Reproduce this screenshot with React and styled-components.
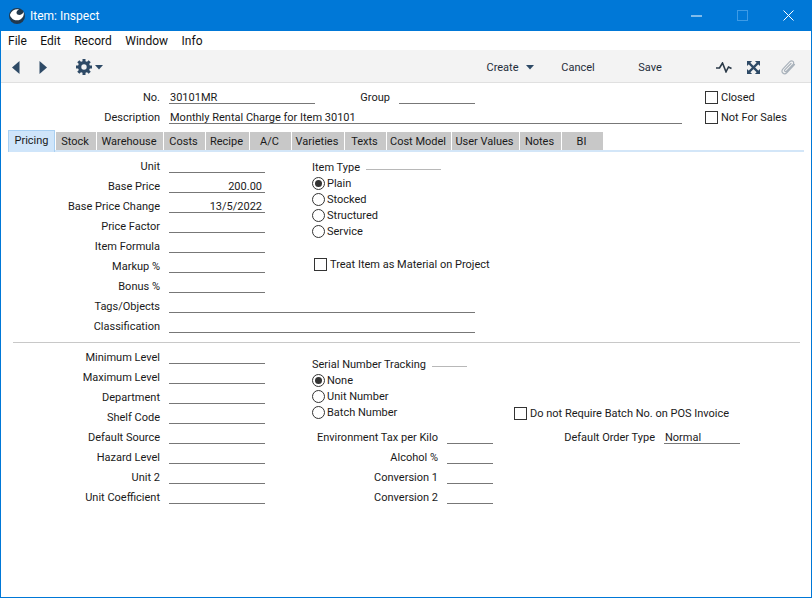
import React from "react";
import styled, { createGlobalStyle } from "styled-components";

const Global = createGlobalStyle`
  html, body { margin: 0; padding: 0; background: #fff; }
  * { box-sizing: border-box; }
  #root { width: 812px; height: 598px; }
`;

const Win = styled.div`
  width: 812px; height: 598px; border: 1px solid #0078d7; border-top: 0;
  display: flex; flex-direction: column; background: #fff; overflow: hidden;
  font-family: Roboto, "Liberation Sans", sans-serif; font-size: 11px; color: #1a1a1a;
`;
const TitleBar = styled.div`
  height: 31px; flex: none; background: #0078d7; display: flex; align-items: center;
  padding-left: 8px; color: #fff; font-size: 12px;
`;
const TitleText = styled.span`margin-left: 5px; flex: 1;`;
const WinControls = styled.div`display: flex; align-items: center; height: 100%;`;
const WinBtn = styled.div`
  width: 46px; height: 100%; display: flex; align-items: center; justify-content: center;
`;
const MenuBar = styled.div`
  height: 19px; flex: none; display: flex; align-items: center; padding-left: 7px; gap: 13.5px;
  font-size: 12px; color: #111;
`;
const Toolbar = styled.div`
  height: 33px; flex: none; background: #f3f3f3; border-bottom: 1px solid #e0e0e0;
  display: flex; align-items: center; color: #1f2d3a; padding-top: 2px;
`;
const ToolIcon = styled.div`
  display: flex; align-items: center; justify-content: center; flex: none;
  width: ${p => p.$w}px; margin-left: ${p => p.$ml || 0}px;
`;
const ToolButton = styled.div`
  flex: none; width: ${p => p.$w}px; margin-left: ${p => p.$ml || 0}px; padding-top: 1px;
  display: flex; align-items: center; justify-content: center; gap: 7px;
`;
const Head = styled.div`
  display: flex; padding-top: 4px; height: 47px; flex: none;
`;
const HeadLeft = styled.div`width: 704px; flex: none;`;
const HeadRight = styled.div`display: flex; flex-direction: column;`;
const Row = styled.div`display: flex; align-items: flex-start; height: 20px;`;
const Label = styled.div`
  width: ${p => p.$w || 159}px; flex: none; text-align: right; margin-right: 9px;
  line-height: 22px; white-space: nowrap;
`;
const Field = styled.div`
  width: ${p => p.$w}px; flex: none; height: 17px; border-bottom: 1px solid #777;
  line-height: 22px; padding: 0 ${p => (p.$right ? "3px" : "1px")} 0 1px;
  text-align: ${p => (p.$right ? "right" : "left")}; white-space: nowrap; color: #1a1a1a;
`;
const Check = styled.label`
  display: flex; align-items: center; height: 20px; padding-top: 2px; line-height: 18px; white-space: nowrap;
`;
const PlacedCheck = styled(Check)`
  margin: ${p => p.$m};
`;
const Box = styled.span`
  width: 13px; height: 13px; border: 1px solid #333; background: #fff; flex: none;
  margin: 0 3px 2px 0;
`;
const Tabs = styled.div`
  display: flex; align-items: flex-end; height: 22px; flex: none; margin-left: 7px; width: 796px;
  border-bottom: 2px solid #d3e6f8; gap: 1px;
`;
const Tab = styled.div`
  width: ${p => p.$w}px; flex: none; text-align: center;
  height: ${p => (p.$active ? 22 : 18)}px; line-height: ${p => (p.$active ? 19 : 20)}px;
  padding-right: ${p => (p.$active ? 0 : 2)}px;
  background: ${p => (p.$active ? "#cfe5fa" : "#c8c8c8")};
  margin-bottom: ${p => (p.$active ? -2 : 0)}px;
  border: ${p => (p.$active ? "1px solid #a9d0f2" : "0")};
  border-bottom: 0;
`;
const Section = styled.div`display: flex; flex: none;`;
const LeftCol = styled.div`width: 311px; flex: none;`;
const RightCol = styled.div`flex: 1; display: flex; flex-direction: column;`;
const ItemTypeCol = styled(RightCol)`padding-top: 3px;`;
const Pricing = styled.div`padding-top: 4px; flex: none;`;
const GroupHead = styled.div`
  display: flex; align-items: center; height: 16px; line-height: 16px; padding-top: 2px;
`;
const GroupLine = styled.span`
  height: 1px; background: #b8b8b8; width: ${p => p.$w}px; margin-left: 6px; margin-top: 2px;
`;
const Radio = styled.label`
  display: flex; align-items: center; height: 16px; padding-top: 2px; line-height: 16px; white-space: nowrap;
`;
const Dot = styled.span`
  width: 13px; height: 13px; border-radius: 50%; border: 1px solid #333; margin: 0 2px 2px 0; flex: none;
  display: flex; align-items: center; justify-content: center;
  &::after { content: ""; width: 7px; height: 7px; border-radius: 50%;
    background: ${p => (p.$on ? "#333" : "transparent")}; }
`;
const Divider = styled.div`
  height: 1px; background: #c8c8c8; margin: 6px 11px 0 12px; flex: none;
`;
const Lower = styled(Section)`padding-top: 4px;`;
const SerialTop = styled.div`display: flex; height: 80px; flex: none;`;
const SerialGroup = styled.div`width: 202px; padding-top: 9px; flex: none;`;

const Logo = () => (
  <svg width="16" height="16" viewBox="0 0 16 16">
    <circle cx="8" cy="8" r="8" fill="#22384c" />
    <path d="M1 6.500C2.500 2.500 6.500 .8 10 1.500 8 2.500 7.200 3.800 7.600 5.300c.5 1.700 3 2.400 5.400 .8.800-.6 1.400-1.400 1.700-2.300.6 3-.6 6.200-3.400 7.700-3 1.600-6.800 .9-8.800-1.800C1.500 8.800 .9 7.500 1 6.500z" fill="#fff" />
  </svg>
);
const Tri = ({ dir }) => (
  <svg width="8" height="13" viewBox="0 0 8 13" fill="#2e4a66">
    <path d={dir === "l" ? "M7.500 0v13L0 6.500z" : "M.5 0v13L8 6.500z"} />
  </svg>
);
const Caret = ({ c = "#2e4a66" }) => (
  <svg width="8" height="5" viewBox="0 0 8 5" fill={c}><path d="M0 0h8L4 4.500z" /></svg>
);
const Gear = () => (
  <svg width="16" height="16" viewBox="0 0 16 16">
    <circle cx="8" cy="8" r="4.400" fill="none" stroke="#2e4a66" strokeWidth="3.400" />
    <g stroke="#2e4a66" strokeWidth="3">
      <path d="M8 0v3M8 13v3M0 8h3M13 8h3M2.300 2.300l2.100 2.100M11.600 11.600l2.100 2.100M2.300 13.700l2.100-2.100M11.600 4.400l2.100-2.100" />
    </g>
  </svg>
);
const Pulse = () => (
  <svg width="16" height="11" viewBox="0 0 16 11" fill="none" stroke="#2b3a48" strokeWidth="1.600">
    <path d="M0 6h3.500L6.500 1l3.500 8.800L12.500 5l3 1.500" />
  </svg>
);
const Expand = () => (
  <svg width="13" height="13" viewBox="0 0 14 14" fill="#2e4a66">
    <path d="M2 2l10 10M12 2L2 12" stroke="#2e4a66" strokeWidth="2.400" />
    <path d="M0 0h5.500L0 5.500zM14 0v5.500L8.500 0zM0 14V8.500L5.500 14zM14 14H8.500L14 8.500z" />
  </svg>
);
const Clip = () => (
  <svg width="15" height="15" viewBox="0 0 15 15" fill="none" stroke="#a9b2bb" strokeWidth="1.200" strokeLinecap="round">
    <path d="M13.500 4.500 6 12.500c-1.300 1.400-3 1.600-4.200.5S.7 10.200 2 8.800L8.800 1.700c1-1 2.300-1.100 3.200-.3s.9 2.100 0 3.100L5.600 11.200c-.5.600-1.200.7-1.700.2s-.4-1.200.1-1.700L10 3.500" />
  </svg>
);

const tabs = [
  ["Pricing", 47], ["Stock", 40], ["Warehouse", 66], ["Costs", 41], ["Recipe", 43], ["A/C", 41],
  ["Varieties", 52], ["Texts", 41], ["Cost Model", 64], ["User Values", 67], ["Notes", 41], ["BI", 41],
];
const pricingRows = [
  ["Unit", ""], ["Base Price", "200.00", true], ["Base Price Change", "13/5/2022", true], ["Price Factor", ""],
  ["Item Formula", ""], ["Markup %", ""], ["Bonus %", ""],
];
const lowerRows = ["Minimum Level", "Maximum Level", "Department", "Shelf Code", "Default Source", "Hazard Level", "Unit 2", "Unit Coefficient"];

export default function App() {
  return (
    <Win>
      <Global />
      <TitleBar>
        <Logo />
        <TitleText>Item: Inspect</TitleText>
        <WinControls>
          <WinBtn><svg width="11" height="11" viewBox="0 0 11 11"><path d="M0 6h11" stroke="#fff" /></svg></WinBtn>
          <WinBtn><svg width="11" height="11" viewBox="0 0 11 11"><rect x=".5" y=".5" width="10" height="10" fill="none" stroke="#3d9be6" /></svg></WinBtn>
          <WinBtn><svg width="11" height="11" viewBox="0 0 11 11"><path d="M.5.5l10 10M10.500.5l-10 10" stroke="#fff" /></svg></WinBtn>
        </WinControls>
      </TitleBar>
      <MenuBar>
        <span>File</span><span>Edit</span><span>Record</span><span>Window</span><span>Info</span>
      </MenuBar>
      <Toolbar>
        <ToolIcon $w={8} $ml={11}><Tri dir="l" /></ToolIcon>
        <ToolIcon $w={8} $ml={19}><Tri dir="r" /></ToolIcon>
        <ToolIcon $w={16} $ml={29}><Gear /></ToolIcon>
        <ToolIcon $w={8} $ml={3}><Caret /></ToolIcon>
        <ToolButton $w={60} $ml={377}>Create <Caret /></ToolButton>
        <ToolButton $w={50} $ml={13}>Cancel</ToolButton>
        <ToolButton $w={50} $ml={22}>Save</ToolButton>
        <ToolIcon $w={16} $ml={41}><Pulse /></ToolIcon>
        <ToolIcon $w={13} $ml={15}><Expand /></ToolIcon>
        <ToolIcon $w={15} $ml={21}><Clip /></ToolIcon>
      </Toolbar>
      <Head>
        <HeadLeft>
          <Row>
            <Label>No.</Label><Field $w={146}>30101MR</Field>
            <Label $w={75}>Group</Label><Field $w={76} />
          </Row>
          <Row>
            <Label>Description</Label><Field $w={513}>Monthly Rental Charge for Item 30101</Field>
          </Row>
        </HeadLeft>
        <HeadRight>
          <Check><Box />Closed</Check>
          <Check><Box />Not For Sales</Check>
        </HeadRight>
      </Head>
      <Tabs>
        {tabs.map(([t, w], i) => <Tab key={t} $w={w} $active={i === 0}>{t}</Tab>)}
      </Tabs>
      <Pricing>
        <Section>
          <LeftCol>
            {pricingRows.map(([l, v, r]) => (
              <Row key={l}><Label>{l}</Label><Field $w={96} $right={r}>{v}</Field></Row>
            ))}
          </LeftCol>
          <ItemTypeCol>
            <GroupHead>Item Type<GroupLine $w={75} /></GroupHead>
            <Radio><Dot $on />Plain</Radio>
            <Radio><Dot />Stocked</Radio>
            <Radio><Dot />Structured</Radio>
            <Radio><Dot />Service</Radio>
            <PlacedCheck $m="15px 0 0 2px"><Box />Treat Item as Material on Project</PlacedCheck>
          </ItemTypeCol>
        </Section>
        <Row><Label>Tags/Objects</Label><Field $w={306} /></Row>
        <Row><Label>Classification</Label><Field $w={306} /></Row>
      </Pricing>
      <Divider />
      <Lower>
        <LeftCol>
          {lowerRows.map(l => (
            <Row key={l}><Label>{l}</Label><Field $w={96} /></Row>
          ))}
        </LeftCol>
        <RightCol>
          <SerialTop>
            <SerialGroup>
              <GroupHead>Serial Number Tracking<GroupLine $w={35} /></GroupHead>
              <Radio><Dot $on />None</Radio>
              <Radio><Dot />Unit Number</Radio>
              <Radio><Dot />Batch Number</Radio>
            </SerialGroup>
            <PlacedCheck $m="56px 0 0 0"><Box />Do not Require Batch No. on POS Invoice</PlacedCheck>
          </SerialTop>
          <Row>
            <Label $w={126}>Environment Tax per Kilo</Label><Field $w={46} />
            <Label $w={162}>Default Order Type</Label><Field $w={76}>Normal</Field>
          </Row>
          <Row><Label $w={126}>Alcohol %</Label><Field $w={46} /></Row>
          <Row><Label $w={126}>Conversion 1</Label><Field $w={46} /></Row>
          <Row><Label $w={126}>Conversion 2</Label><Field $w={46} /></Row>
        </RightCol>
      </Lower>
    </Win>
  );
}
